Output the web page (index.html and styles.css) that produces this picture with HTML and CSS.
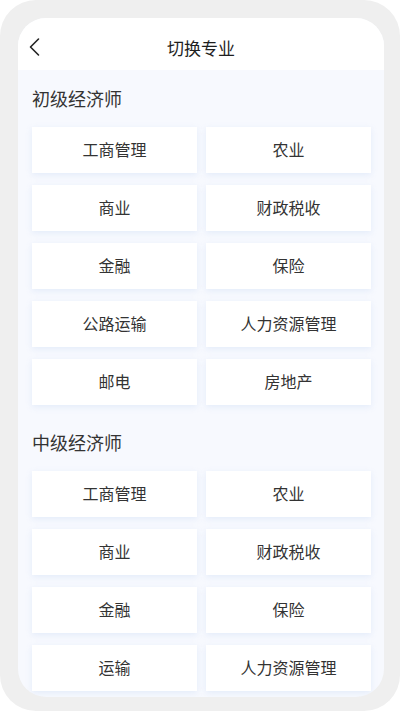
FILE: index.html
```html
<!DOCTYPE html>
<html lang="zh">
<head>
<meta charset="utf-8">
<title>切换专业</title>
<link rel="stylesheet" href="styles.css">
</head>
<body>
<div class="frame">
  <div class="card">
    <div class="header">
      <svg class="back" width="12" height="20" viewBox="0 0 12 20"><path d="M9.5 2 L1.5 10 L9.5 18" fill="none" stroke="#222" stroke-width="1.6" stroke-linecap="round" stroke-linejoin="round"/></svg>
      <div class="title">切换专业</div>
    </div>
    <div class="content">
      <div class="section-title">初级经济师</div>
      <div class="grid">
        <div class="item">工商管理</div>
        <div class="item">农业</div>
        <div class="item">商业</div>
        <div class="item">财政税收</div>
        <div class="item">金融</div>
        <div class="item">保险</div>
        <div class="item">公路运输</div>
        <div class="item">人力资源管理</div>
        <div class="item">邮电</div>
        <div class="item">房地产</div>
      </div>
      <div class="section-title second">中级经济师</div>
      <div class="grid">
        <div class="item">工商管理</div>
        <div class="item">农业</div>
        <div class="item">商业</div>
        <div class="item">财政税收</div>
        <div class="item">金融</div>
        <div class="item">保险</div>
        <div class="item">运输</div>
        <div class="item">人力资源管理</div>
      </div>
    </div>
  </div>
</div>
</body>
</html>
```
FILE: styles.css
```css
html, body {
  margin: 0;
  padding: 0;
  background: #ffffff;
}
body {
  font-family: "Noto Sans CJK SC", "Noto Sans", sans-serif;
  color: #333;
}
.frame {
  width: 400px;
  height: 711px;
  box-sizing: border-box;
  background: #efefef;
  border-radius: 36px;
  padding: 18px 16px 14px 18px;
  overflow: hidden;
}
.card {
  height: 679px;
  background: #f7f9fe;
  border-radius: 28px;
  overflow: hidden;
  display: flex;
  flex-direction: column;
}
.header {
  flex: none;
  height: 52px;
  background: #ffffff;
  position: relative;
  display: flex;
  align-items: center;
  justify-content: center;
}
.back {
  position: absolute;
  left: 11px;
  top: 19px;
}
.title {
  font-size: 17px;
  color: #1e1e1e;
  line-height: 17px;
  margin-top: 6px;
}
.content {
  padding: 0 13px 0 14px;
}
.section-title {
  font-size: 18px;
  line-height: 18px;
  height: 24px;
  padding-top: 1px;
  box-sizing: border-box;
  margin: 18px 0 15px 0;
  color: #333;
}
.section-title.second {
  margin-top: 27px;
}
.grid {
  display: grid;
  grid-template-columns: 165px 165px;
  column-gap: 9px;
  row-gap: 12px;
}
.item {
  height: 46px;
  box-sizing: border-box;
  padding-bottom: 3px;
  background: #ffffff;
  display: flex;
  align-items: center;
  justify-content: center;
  font-size: 16px;
  line-height: 16px;
  color: #333;
  box-shadow: 0 2px 6px rgba(205, 220, 245, 0.45);
}
```
